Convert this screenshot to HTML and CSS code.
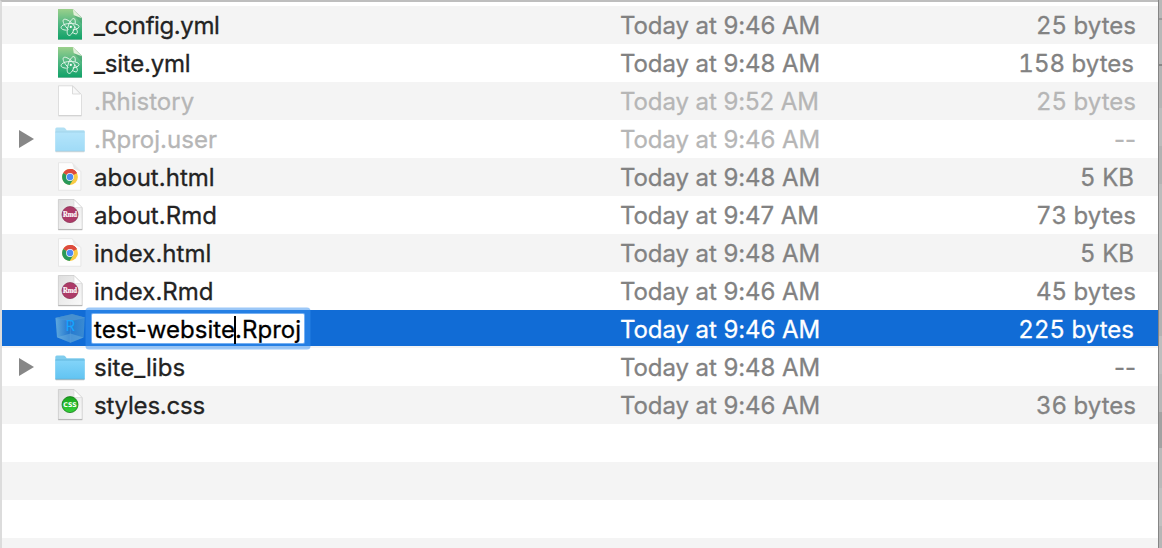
FILE: index.html
```html
<!DOCTYPE html>
<html lang="en">
<head>
<meta charset="utf-8">
<title>Files</title>
<link rel="stylesheet" href="styles.css">
</head>
<body>
<svg class="defs" aria-hidden="true">
  <defs>
    <linearGradient id="green" x1="0" y1="0" x2="0" y2="1"><stop offset="0" stop-color="#9bd08b"/><stop offset=".45" stop-color="#55b883"/><stop offset="1" stop-color="#10a268"/></linearGradient>
    <linearGradient id="paper" x1="0" y1="0" x2="1" y2="1"><stop offset="0" stop-color="#dedede"/><stop offset="1" stop-color="#fafafa"/></linearGradient>
    <linearGradient id="blue" x1="0" y1="0" x2="0" y2="1"><stop offset="0" stop-color="#83d4f9"/><stop offset="1" stop-color="#62c4f2"/></linearGradient>
    <linearGradient id="leaf" x1="0" y1="0" x2="0" y2="1"><stop offset="0" stop-color="#18a51d"/><stop offset="1" stop-color="#35d139"/></linearGradient>
    <linearGradient id="cube" x1="0" y1="0" x2="1" y2="0"><stop offset="0" stop-color="#5fa9de"/><stop offset=".45" stop-color="#2478cf"/><stop offset="1" stop-color="#3a8bd2"/></linearGradient>
    <symbol id="atom" viewBox="0 0 32 38">
      <path d="M4 3.2H19.2L28 12V34H4z" fill="#777" opacity=".4"/>
      <path d="M4 3H18.8L28 12V33.6H4z" fill="url(#green)"/>
      <path d="M18.8 3.2L27.8 12.2 19.8 9.2z" fill="#e2efda"/>
      <path d="M19.8 9.2L28 12.2V18z" fill="#238c5f" opacity=".3"/>
      <g fill="none" stroke="#eaf8ee" stroke-width=".95">
        <path d="M12.5 24.2C8.8 23.9 6.9 22.9 7.1 21.4C7.5 19 12 17.3 17.2 17.5C21.8 17.7 25.4 19 25 20.8C24.7 22.3 22 23.5 18.7 24"/>
        <path d="M20.7 20.5C19.9 25.4 17.2 29.6 15 29.4C12.8 29.1 12.7 25 14 20.8C15.3 16.2 18 12.1 20 12.6C21.2 13 21.5 15.2 21.1 17.8"/>
        <path d="M18.3 26.1C20.2 27.8 22.2 28.5 23 27.4C24.4 25.5 21.7 21.1 18 17.4C14.6 14 10.6 12.2 9.4 13.8C8.3 15.4 10.4 19.7 14.4 23.6"/>
      </g>
      <circle cx="16.8" cy="20.9" r="1.1" fill="#fff"/>
    </symbol>
    <symbol id="blank" viewBox="0 0 32 38">
      <path d="M4.5 3.8H19L27.5 12.6V33.5H4.5z" fill="#fff" stroke="#dadada" stroke-width=".9"/>
      <path d="M4.5 33.8H27.5" stroke="#cfcfcf"/>
      <path d="M18.5 4V12H26.5z" fill="#f8f8f8" stroke="#d4d4d4" stroke-width=".8"/>
    </symbol>
    <symbol id="chrome" viewBox="0 0 32 38">
      <path d="M4.5 4.7H18L26.9 13.5V32.3H4.5z" fill="#fdfdfd" stroke="#e2e2e2" stroke-width=".8"/>
      <path d="M18 4.8L26.8 13.7 20 10.8z" fill="#e8e8e8"/>
      <circle cx="16" cy="19" r="7.9" fill="#f9cb43"/>
      <path d="M16 19L9.2 15A7.9 7.9 0 0 1 22.9 15.1z" fill="#dd4b3e"/>
      <path d="M16 19L9.2 15A7.9 7.9 0 0 0 15.6 26.9L19.5 21z" fill="#28995a"/>
      <path d="M16 11.1A7.9 7.9 0 0 1 22.9 15.2H16z" fill="#dd4b3e"/>
      <circle cx="16" cy="19" r="3.9" fill="#f5f6f8"/><circle cx="16" cy="19" r="3.2" fill="#4c8bf5"/>
    </symbol>
    <symbol id="page" viewBox="0 0 32 38">
      <path d="M4.4 3.5H20L28.2 11.7V33.4H4.4z" fill="url(#paper)" stroke="#c9c9c9" stroke-width=".8"/>
      <path d="M4.2 33.7H28.3" stroke="#ababab" stroke-width=".9"/>
      <path d="M20 3.7V11.5H28z" fill="#fff" stroke="#d5d5d5" stroke-width=".6"/>
    </symbol>
    <symbol id="rmd" viewBox="0 0 32 38">
      <use href="#page"/>
      <circle cx="16" cy="18.6" r="8" fill="#ad3a67" stroke="#8b3658" stroke-width=".8"/>
      <text class="rmd-label" x="16" y="21.2" text-anchor="middle" textLength="14.2" lengthAdjust="spacingAndGlyphs">Rmd</text>
    </symbol>
    <symbol id="css" viewBox="0 0 32 38">
      <use href="#page"/>
      <circle cx="16" cy="18.6" r="8" fill="url(#leaf)" stroke="#167a1b" stroke-width=".8"/>
      <text class="css-label" x="16" y="21.2" text-anchor="middle" textLength="13.4" lengthAdjust="spacingAndGlyphs">CSS</text>
    </symbol>
    <symbol id="folder" viewBox="0 0 32 38">
      <path d="M1.3 31.6V9Q1.3 7.4 2.7 7.4H9.5Q10.6 7.4 11.4 8.5L12.7 10.2H29.5Q30.7 10.2 30.7 11.4V31.6z" fill="#80cdee"/>
      <path d="M1.5 12.2H30.5V30.7H1.5z" fill="url(#blue)"/>
      <path d="M1.3 12H30.7M1.3 31H30.7" stroke="#57afd7" stroke-width=".7"/>
      <path d="M1.8 31.8H30.2" stroke="#999" stroke-width=".6"/>
    </symbol>
    <symbol id="rproj" viewBox="0 0 32 38">
      <path d="M1.5 8L18 4 30.8 7.5 29.6 27.4 16.5 32.8 3 27.2z" fill="url(#cube)"/>
      <path d="M1.5 8L18 4 30.8 7.5 16.5 11z" fill="#4690d0"/>
      <path d="M3 27.2L16.5 23.5 29.6 27.4 16.5 32.8z" fill="#6bb0e0" opacity=".5"/>
      <path d="M1.5 8L16.5 11 30.8 7.5M16.5 11V32.6" fill="none" stroke="#5aa2dc" stroke-width=".5" opacity=".6"/>
      <text class="r-label" x="11.4" y="21">R</text>
    </symbol>
  </defs>
</svg>
<main class="window">
  <div class="list">
    <div class="row"><svg class="icon"><use href="#atom"/></svg><span class="name tight">_config.yml</span><span class="date">Today at 9:46 AM</span><span class="size">25 bytes</span></div>
    <div class="row"><svg class="icon"><use href="#atom"/></svg><span class="name snug">_site.yml</span><span class="date">Today at 9:48 AM</span><span class="size inset">158 bytes</span></div>
    <div class="row hidden-file"><svg class="icon solid"><use href="#blank"/></svg><span class="name">.Rhistory</span><span class="date">Today at 9:52 AM</span><span class="size">25 bytes</span></div>
    <div class="row hidden-file"><span class="arrow"></span><svg class="icon"><use href="#folder"/></svg><span class="name">.Rproj.user</span><span class="date">Today at 9:46 AM</span><span class="size dashes">--</span></div>
    <div class="row"><svg class="icon"><use href="#chrome"/></svg><span class="name">about.html</span><span class="date">Today at 9:48 AM</span><span class="size inset">5 KB</span></div>
    <div class="row"><svg class="icon"><use href="#rmd"/></svg><span class="name">about.Rmd</span><span class="date">Today at 9:47 AM</span><span class="size">73 bytes</span></div>
    <div class="row"><svg class="icon"><use href="#chrome"/></svg><span class="name">index.html</span><span class="date">Today at 9:48 AM</span><span class="size inset">5 KB</span></div>
    <div class="row"><svg class="icon"><use href="#rmd"/></svg><span class="name">index.Rmd</span><span class="date">Today at 9:46 AM</span><span class="size">45 bytes</span></div>
    <div class="row selected"><svg class="icon"><use href="#rproj"/></svg><span class="name"><span class="editor">test-website<i class="caret"></i>.Rproj</span></span><span class="date">Today at 9:46 AM</span><span class="size inset">225 bytes</span></div>
    <div class="row"><span class="arrow"></span><svg class="icon"><use href="#folder"/></svg><span class="name">site_libs</span><span class="date">Today at 9:48 AM</span><span class="size dashes">--</span></div>
    <div class="row"><svg class="icon"><use href="#css"/></svg><span class="name snug">styles.css</span><span class="date">Today at 9:46 AM</span><span class="size">36 bytes</span></div>
    <div class="row"></div>
    <div class="row"></div>
    <div class="row"></div>
    <div class="row"></div>
  </div>
  <div class="edge"></div>
</main>
</body>
</html>
```
FILE: styles.css
```css
* { box-sizing: border-box; }
body { margin: 0; overflow: hidden; background: #fff; font-family: Inter, "Liberation Sans", sans-serif; }
.defs { position: absolute; width: 0; height: 0; }
.window { display: flex; width: 1162px; height: 548px; overflow: hidden; }
.list { width: 1158px; height: 548px; overflow: hidden; padding-top: 4px; border-left: 2px solid #dcdcdc; border-top: 2px solid #bebebe; }
.edge { width: 4px; border-left: 1px solid #858585; background: linear-gradient(#b8b8b8 0 18px, #999 18px 20px, #b8b8b8 20px 64px, #888 64px 66px, #b4b4b4 66px 108px, #bcbcbc 108px 146px, #b2b2b2 146px 184px, #bcbcbc 184px 260px, #b2b2b2 260px 336px, #bebebe 336px 374px, #b7b7b7 374px 412px, #a2a2a2 412px 448px, #b9b9b9 448px 488px, #c0c0c0 488px 526px, #b6b6b6 526px); }
.row { display: grid; grid-template-columns: 52px 32px 534px 1fr 200px; grid-template-rows: 38px; height: 38px; color: #232323; font-size: 24px; line-height: 40px; white-space: nowrap; -webkit-text-stroke: .3px currentColor; }
.row:nth-child(odd) { background: #f4f4f4; }
.arrow { grid-column: 1; align-self: center; margin-left: 17px; border-left: 15px solid #878787; border-top: 9px solid transparent; border-bottom: 9px solid transparent; width: 0; }
.icon { grid-column: 2; width: 32px; height: 38px; -webkit-text-stroke: 0; }
.name { grid-column: 3; padding-left: 8px; letter-spacing: .03px; }
.tight { letter-spacing: -.4px; }
.snug { letter-spacing: -.2px; }
.date { grid-column: 4; color: #828282; letter-spacing: -.08px; }
.size { grid-column: 5; padding-right: 22px; text-align: right; color: #828282; font-variant-numeric: tabular-nums; letter-spacing: .02px; }
.inset { padding-right: 24px; }
.dashes { font-variant-numeric: normal; }
.hidden-file .name, .hidden-file .date, .hidden-file .size { color: #b6b6b6; }
.hidden-file .icon:not(.solid) { opacity: .6; }
.row.selected { background: linear-gradient(#116cd6 0 36px, #f4f4f4 36px); }
.selected .date, .selected .size { color: #fff; }
.editor { position: relative; z-index: 1; display: block; width: 212px; height: 29px; margin: 4px 0 0 -2px; padding-left: 2px; line-height: 32px; color: #000; background: #fff; border-radius: 1px; box-shadow: 0 0 0 1px #76b0f2, 0 0 0 6.5px rgba(58, 145, 241, .5); }
.caret { display: inline-block; width: 2px; height: 28px; margin: 0 -1px; vertical-align: -6px; background: #000; }
.rmd-label { font: bold 7.5px "Liberation Serif", serif; fill: #fff; stroke: #fff; stroke-width: .2px; }
.css-label { font: bold 6.5px "DejaVu Sans", sans-serif; fill: #fff; }
.r-label { font: 15px Inter, sans-serif; fill: #16a4ff; }
```
